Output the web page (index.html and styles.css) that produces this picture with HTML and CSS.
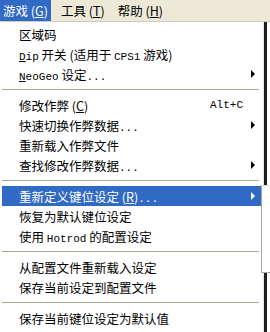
FILE: index.html
```html
<!DOCTYPE html>
<html lang="zh-CN">
<head>
<meta charset="UTF-8">
<title>游戏菜单</title>
<link rel="stylesheet" href="styles.css">
</head>
<body>

<!-- 菜单栏 -->
<div class="menubar">
    <span class="top active">游戏 (<u>G</u>)</span>
    <span class="top">工具 (<u>T</u>)</span>
    <span class="top">帮助 (<u>H</u>)</span>
</div>

<div class="frame">
    <div class="menu">
        <div class="item"><span class="label">区域码</span></div>
        <div class="item"><span class="label"><span class="en"><u>D</u>ip</span> 开关 (适用于 <span class="en">CPS1</span> 游戏)</span></div>
        <div class="item"><span class="label"><span class="en"><u>N</u>eoGeo</span> 设定<span class="en">...</span></span><span class="arrow"></span></div>
        <div class="sep"></div>
        <div class="item"><span class="label">修改作弊 (<u>C</u>)</span><span class="key en">Alt+C</span></div>
        <div class="item"><span class="label">快速切换作弊数据<span class="en">...</span></span><span class="arrow"></span></div>
        <div class="item"><span class="label">重新载入作弊文件</span></div>
        <div class="item"><span class="label">查找修改作弊数据<span class="en">...</span></span><span class="arrow"></span></div>
        <div class="sep"></div>
        <div class="item selected"><span class="label">重新定义键位设定 (<u>R</u>)<span class="en">...</span></span><span class="arrow"></span></div>
        <div class="item"><span class="label">恢复为默认键位设定</span></div>
        <div class="item"><span class="label">使用 <span class="en">Hotrod</span> 的配置设定</span></div>
        <div class="sep"></div>
        <div class="item"><span class="label">从配置文件重新载入设定</span></div>
        <div class="item"><span class="label">保存当前设定到配置文件</span></div>
        <div class="sep"></div>
        <div class="item"><span class="label">保存当前键位设定为默认值</span></div>
    </div>
    <div class="shadow"></div>
</div>

<!-- 子菜单的边缘 -->
<div class="sub-edge"></div>

</body>
</html>
```

FILE: styles.css
```css
body {
    margin: 0;
    width: 270px;
    height: 332px;
    overflow: hidden;
    background: #fff;
    font-family: "Noto Sans CJK SC", sans-serif;
    font-size: 12.5px;
    color: #000;
    position: relative;
}

u {
    text-decoration: underline;
    text-underline-offset: 1px;
}

.en {
    font-family: "Liberation Mono", monospace;
    font-size: 11px;
}

.menubar {
    display: flex;
    height: 21px;
    background: #ece9d8;
    border-bottom: 1px solid #cfcbba;
}

.top {
    height: 21px;
    line-height: 21px;
    padding: 0 5px;
    margin-right: 3px;
}

.top.active {
    background: #316ac5;
    color: #fff;
    padding: 0 3px;
    margin-right: 5px;
}

.frame {
    display: flex;
    height: 310px;
}

.menu {
    width: 259px;
    padding: 2px 2px 0 2px;
    border-right: 1px solid #e4e4e4;
    background: #fff;
}

.shadow {
    width: 3px;
    background: #1e1e1e;
}

.item {
    display: flex;
    align-items: center;
    height: 20px;
    padding-left: 17px;
    padding-right: 4px;
    white-space: nowrap;
}

.item .label {
    flex: 1;
}

.item .key {
    margin-right: 14px;
}

.item.selected {
    background: #316ac5;
    color: #fff;
}

.arrow {
    width: 0;
    height: 0;
    border-top: 4px solid transparent;
    border-bottom: 4px solid transparent;
    border-left: 4px solid #000;
    margin-right: 2px;
}

.selected .arrow {
    border-left-color: #fff;
}

.sep {
    height: 11px;
    display: flex;
    align-items: center;
}

.sep::after {
    content: "";
    flex: 1;
    height: 1px;
    background: #aca899;
    margin-right: 2px;
}

.sub-edge {
    position: absolute;
    left: 261px;
    top: 185px;
    width: 9px;
    height: 86px;
    background: #fff;
    border-left: 1px solid #aca899;
    border-top: 1px solid #d8d8d8;
    border-bottom: 1px solid #aca899;
}
```
